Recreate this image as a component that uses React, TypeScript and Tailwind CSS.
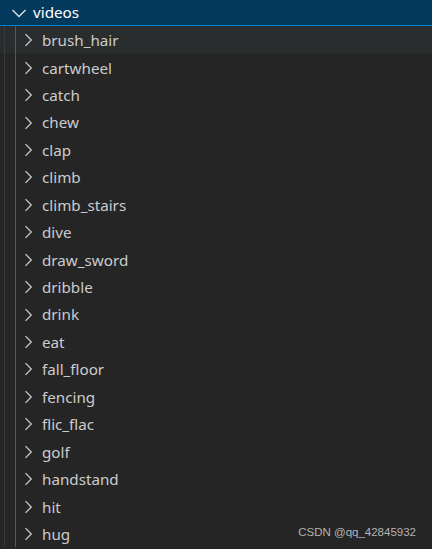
const items = [
  'brush_hair',
  'cartwheel',
  'catch',
  'chew',
  'clap',
  'climb',
  'climb_stairs',
  'dive',
  'draw_sword',
  'dribble',
  'drink',
  'eat',
  'fall_floor',
  'fencing',
  'flic_flac',
  'golf',
  'handstand',
  'hit',
  'hug',
];

function ChevronRight() {
  return (
    <svg width="20" height="20" viewBox="0 0 16 16" className="shrink-0">
      <path d="M6 3.3 10.6 8 6 12.7" fill="none" stroke="#c5c5c5" strokeWidth="1.1" />
    </svg>
  );
}

function ChevronDown() {
  return (
    <svg width="20" height="20" viewBox="0 0 16 16" className="shrink-0">
      <path d="M2.8 5.6 8 10.8 13.2 5.6" fill="none" stroke="#e0e0e0" strokeWidth="1.1" />
    </svg>
  );
}

export default function App() {
  return (
    <div
      className="relative h-[549px] w-[432px] overflow-hidden bg-[#252526] text-[15.2px] text-[#cccccc]"
      style={{ fontFamily: '"Noto Sans", "Open Sans", sans-serif' }}
    >
      <div className="flex h-[26px] items-center border-b border-[#007fd4] bg-[#04395e] pl-[9px] text-white">
        <ChevronDown />
        <span className="ml-[4px] pt-[1px] leading-none">videos</span>
      </div>
      <div className="relative">
        <div className="absolute left-[4px] top-0 bottom-0 w-px bg-[#3a3a3a]" />
        <div className="absolute left-[15px] top-0 bottom-0 w-px bg-[#585858]" />
        {items.map((name, i) => (
          <div
            key={name}
            className={`flex h-[27.45px] items-center pl-[18px] pt-[1px] ${i === 0 ? 'bg-[#2a2d2e]' : ''}`}
          >
            <ChevronRight />
            <span className="ml-[4px] pt-[1px] leading-none">{name}</span>
          </div>
        ))}
      </div>
      <div
        className="absolute right-[16px] bottom-[8px] text-[11.5px] text-[#b4b4b4]"
        style={{ fontFamily: '"Liberation Sans", Arial, sans-serif' }}
      >
        CSDN @qq_42845932
      </div>
    </div>
  );
}
